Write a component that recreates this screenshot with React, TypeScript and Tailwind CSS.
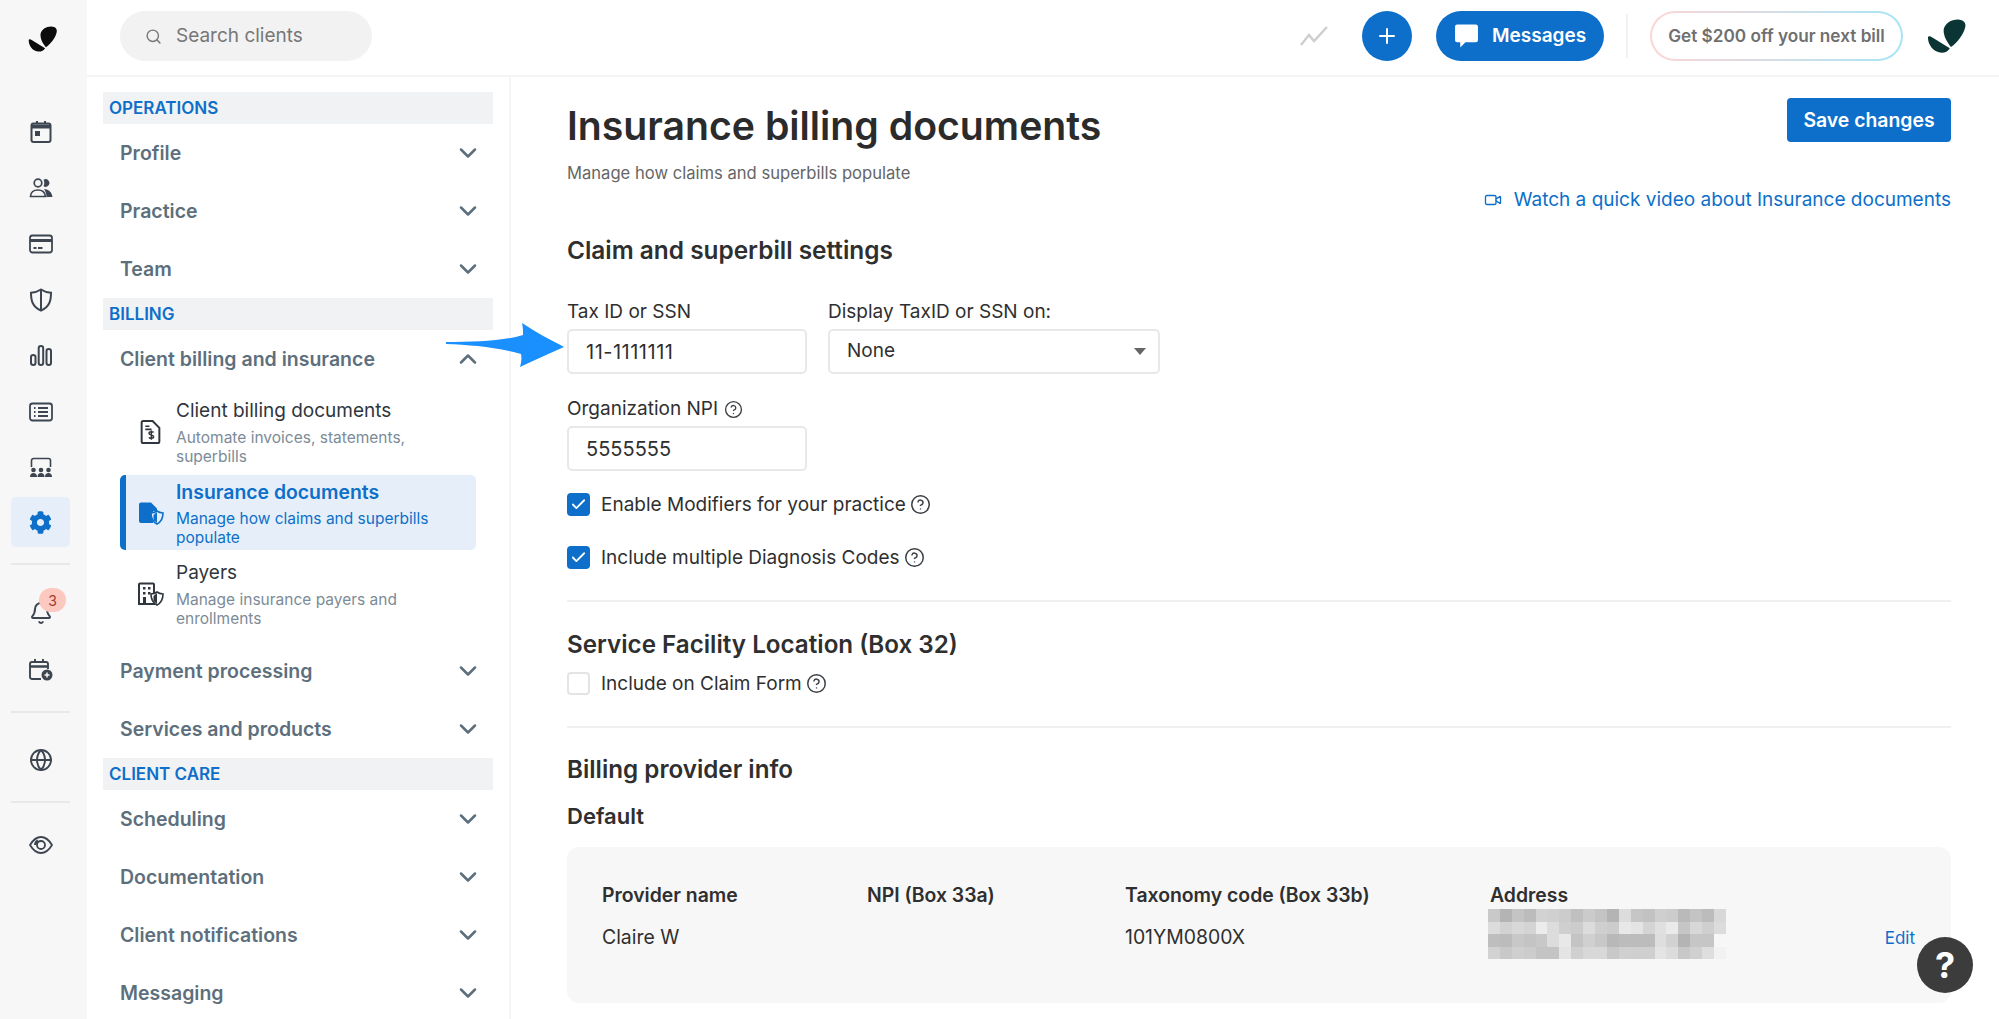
import { Bell, Check, ChevronDown, ChevronUp, CircleHelp, Globe, Plus, Search, Video } from "lucide-react";
import { FaCog } from "react-icons/fa";

const Logo = ({ className }: { className: string }) => (
  <svg viewBox="30 22 130 116" className={className} fill="currentColor">
    <path d="M84 60C88 38 108 26 130 26c20 0 28 12 24 26-6 26-28 50-46 64C96 100 84 84 84 60z" />
    <path d="M33 86c1-6 7-6 13-2l58 36c-6 12-20 16-32 14-22-4-38-24-39-48z" />
  </svg>
);

const CalendarIcon = () => (
  <svg viewBox="0 0 24 24" className="w-[24px] h-[24px]" fill="none" stroke="#3d4650" strokeWidth="2">
    <rect x="2.500" y="3.500" width="19" height="18.500" rx="2" />
    <path d="M2.500 6.500h19" strokeWidth="4" />
    <path d="M8 1v3M16 1v3" />
    <rect x="6" y="11" width="5" height="5" fill="#3d4650" stroke="none" />
  </svg>
);

const UsersIcon = () => (
  <svg viewBox="0 0 24 24" className="w-[24px] h-[24px]" fill="none" stroke="#3d4650" strokeWidth="1.700">
    <circle cx="9" cy="7" r="3.800" />
    <path d="M1.500 20.500c0-4 3.200-6.500 7.500-6.500s7 2.500 7.500 6.500z" />
    <path d="M14.500 3.800a3.800 3.800 0 1 1 0 6.400c1-1.800 1-4.600 0-6.400z" fill="#3d4650" stroke="none" />
    <path d="M15 13c5 .5 8 3.500 8.500 8h-6c0-3-1-6-2.500-8z" fill="#3d4650" stroke="none" />
  </svg>
);

const CardIcon = () => (
  <svg viewBox="0 0 24 24" className="w-[24px] h-[24px]" fill="none" stroke="#3d4650" strokeWidth="1.800">
    <rect x="1" y="3.500" width="22" height="17" rx="2.500" />
    <path d="M1 8.500h22" strokeWidth="3" />
    <path d="M4.500 16h3M9 16h4.500" />
  </svg>
);

const ShieldIcon = () => (
  <svg viewBox="0 0 24 24" className="w-[24px] h-[24px]" fill="none" stroke="#3d4650" strokeWidth="2">
    <path d="M12 1.500c3 2 6 3 10 3.200 0 8-1.500 14-10 18C3.500 18.700 2 12.700 2 4.700c4-.2 7-1.200 10-3.200z" />
    <path d="M12 2v20" />
  </svg>
);

const BarsIcon = () => (
  <svg viewBox="0 0 24 24" className="w-[24px] h-[24px]" fill="none" stroke="#3d4650" strokeWidth="2">
    <rect x="2" y="11" width="4.500" height="10" rx="2.200" />
    <rect x="9.700" y="2" width="4.500" height="19" rx="2.200" />
    <rect x="17.500" y="5" width="4.500" height="16" rx="2.200" />
  </svg>
);

const ListIcon = () => (
  <svg viewBox="0 0 24 24" className="w-[24px] h-[24px]" fill="none" stroke="#3d4650" strokeWidth="1.800">
    <rect x="1" y="3.500" width="22" height="17" rx="2.500" />
    <path d="M5 8h1.500M5 12h1.500M5 16h1.500M9 8h10M9 12h10M9 16h10" />
  </svg>
);

const GroupIcon = () => (
  <svg viewBox="0 0 24 24" className="w-[24px] h-[24px]" fill="#3d4650">
    <path d="M2.500 11V4.500a2 2 0 0 1 2-2h15a2 2 0 0 1 2 2V11" fill="none" stroke="#3d4650" strokeWidth="1.600" />
    <circle cx="4.500" cy="14" r="2.300" />
    <circle cx="12" cy="14" r="2.300" />
    <circle cx="19.500" cy="14" r="2.300" />
    <path d="M1 21c0-3 1.500-4 3.500-4S8 18 8 21zM8.500 21c0-3 1.500-4 3.500-4s3.500 1 3.500 4zM16 21c0-3 1.500-4 3.500-4s3.500 1 3.500 4z" />
  </svg>
);

const CalendarPlusIcon = () => (
  <svg viewBox="0 0 24 24" className="w-[24px] h-[24px]" fill="none" stroke="#3d4650" strokeWidth="1.900">
    <path d="M12 21H3a2 2 0 0 1-2-2V6a2 2 0 0 1 2-2h14a2 2 0 0 1 2 2v5" />
    <path d="M1 8.500h18" strokeWidth="2.500" />
    <path d="M6 1v4M14 1v4" />
    <circle cx="18" cy="17" r="5.500" fill="#3d4650" stroke="none" />
    <path d="M18 14.500v5M15.500 17h5" stroke="#f7f7f7" strokeWidth="1.500" />
  </svg>
);

const EyeIcon = () => (
  <svg viewBox="0 0 24 24" className="w-[24px] h-[24px]" fill="none" stroke="#3d4650" strokeWidth="1.800">
    <path d="M1 12c3-5 7-8 11-8s8 3 11 8c-3 5-7 8-11 8s-8-3-11-8z" />
    <circle cx="12" cy="12" r="4" />
    <path d="M9 7.500c-1.500.8-2.700 2.500-2.700 4.500" strokeWidth="2.500" />
  </svg>
);

const DocDollarIcon = () => (
  <svg viewBox="0 0 24 24" className="w-[25px] h-[26px]" fill="none" stroke="#2f363d" strokeWidth="1.900">
    <path d="M14 1.500H5a1.500 1.500 0 0 0-1.500 1.500v18A1.500 1.500 0 0 0 5 22.500h14a1.500 1.500 0 0 0 1.500-1.500V8z" />
    <path d="M7 6.500h4M7 9.500h6" strokeWidth="1.500" />
    <path d="M15 12.500c-.5-1-4.500-1.200-4.500.8s4.500 1.200 4.500 3.200-4 1.800-4.500.7M12.800 10.500v9" strokeWidth="1.400" />
  </svg>
);

const DocShieldIcon = () => (
  <svg viewBox="0 0 26 24" className="w-[26px] h-[24px]">
    <path d="M3 1.500h10l6 6V10h-4v12H3a2 2 0 0 1-2-2V3.500a2 2 0 0 1 2-2z" fill="#0d6fc9" />
    <path d="M19 10c2 1.400 3.500 1.800 6 2 0 5-1 8.500-6 11-5-2.500-6-6-6-11 2.500-.2 4-.6 6-2z" fill="#e6eff9" stroke="#0d6fc9" strokeWidth="1.600" />
    <path d="M19 11v11l-3.500-3v-5z" fill="#0d6fc9" />
  </svg>
);

const BuildingShieldIcon = () => (
  <svg viewBox="0 0 26 24" className="w-[26px] h-[24px]">
    <path d="M2 1.500h13a1 1 0 0 1 1 1V22H1V2.500a1 1 0 0 1 1-1z" fill="none" stroke="#2f363d" strokeWidth="2" />
    <path d="M5 5h2.500v2.500H5zM10 5h2.500v2.500H10zM5 10h2.500v2.500H5zM10 10h2.500v2.500H10zM5 15h3v7H5z" fill="#2f363d" />
    <path d="M19 10c2 1.400 3.500 1.800 6 2 0 5-1 8.500-6 11-5-2.500-6-6-6-11 2.500-.2 4-.6 6-2z" fill="#fff" stroke="#2f363d" strokeWidth="1.600" />
    <path d="M19 11v11l-3.500-3v-5z" fill="#2f363d" />
  </svg>
);

const railTop = [
  <CalendarIcon key="calendar" />,
  <UsersIcon key="users" />,
  <CardIcon key="card" />,
  <ShieldIcon key="shield" />,
  <BarsIcon key="bars" />,
  <ListIcon key="list" />,
  <GroupIcon key="group" />,
];

const Rail = () => (
  <div className="w-[87px] shrink-0 bg-[#f7f7f7] flex flex-col items-center pr-[6px]">
    <Logo className="w-[30px] h-[28px] mt-[25px] ml-[4px] text-[#0c0c0c]" />
    <div className="flex flex-col items-center mt-[51px]">
      {railTop.map((icon) => (
        <div key={icon.key} className="h-[56px] w-[59px] flex items-center justify-center">
          {icon}
        </div>
      ))}
      <div className="h-[50px] w-[59px] flex items-center justify-center bg-[#e6eff9] rounded-[5px] mt-[1px]">
        <FaCog size={23} color="#0d6fc9" />
      </div>
      <div className="w-[59px] h-[2px] bg-[#e8e8e8] mt-[16px]" />
      <div className="relative h-[58px] w-[59px] mt-[19px] flex items-center justify-center">
        <Bell size={24} color="#3d4650" strokeWidth={2} />
        <span className="absolute left-[28px] top-[4px] w-[27px] h-[24px] rounded-full bg-[#fdc8c0] text-[#a3392b] text-[14px] flex items-center justify-center">
          3
        </span>
      </div>
      <div className="h-[56px] w-[59px] flex items-center justify-center">
        <CalendarPlusIcon />
      </div>
      <div className="w-[59px] h-[2px] bg-[#e8e8e8] mt-[13px]" />
      <div className="h-[48px] w-[59px] flex items-center justify-center mt-[23px]">
        <Globe size={24} color="#3d4650" strokeWidth={1.9} />
      </div>
      <div className="w-[59px] h-[2px] bg-[#e8e8e8] mt-[17px]" />
      <div className="h-[48px] w-[59px] flex items-center justify-center mt-[18px]">
        <EyeIcon />
      </div>
    </div>
  </div>
);

const SectionTitle = ({ title }: { title: string }) => (
  <div className="h-[32px] bg-[#f1f2f4] flex items-center pl-[6px] pt-[2px] text-[17px] font-semibold text-[#0d6fc9]">{title}</div>
);

const NavRow = ({ label, open }: { label: string; open?: boolean }) => (
  <div className="h-[58px] flex items-center justify-between pl-[17px] pr-[11px] text-[19.500px] font-semibold text-[#5d6f7c]">
    <span className="mt-[2px]">{label}</span>
    {open ? <ChevronUp size={28} color="#5d6f7c" strokeWidth={2.2} /> : <ChevronDown size={28} color="#5d6f7c" strokeWidth={2.2} />}
  </div>
);

const SubItem = ({
  icon,
  title,
  lines,
  active,
}: {
  icon: React.ReactNode;
  title: string;
  lines: string[];
  active?: boolean;
}) => (
  <div
    className={
      active
        ? "h-[75px] ml-[17px] mr-[17px] flex bg-[#e6eff9] rounded-[5px] border-l-[6px] border-[#0d6fc9] pl-[12px] pt-[5px]"
        : "h-[75px] ml-[17px] mr-[17px] flex border-l-[6px] border-transparent pl-[12px] pt-[5px]"
    }
  >
    <div className="w-[38px] shrink-0 flex items-center pb-[5px]">{icon}</div>
    <div>
      <div className={active ? "text-[19.400px] leading-[24px] font-semibold text-[#0d6fc9] mb-[5px]" : "text-[19px] leading-[24px] text-[#2f363d] mb-[5px]"}>
        {title}
      </div>
      {lines.map((line) => (
        <div key={line} className={active ? "text-[15.500px] leading-[19px] text-[#0d6fc9]" : "text-[15.500px] leading-[19px] text-[#7c8b97]"}>
          {line}
        </div>
      ))}
    </div>
  </div>
);

const Sidebar = () => (
  <div className="w-[424px] shrink-0 border-r-2 border-[#f6f6f6] pl-[16px] pr-[16px] pt-[15px] overflow-hidden">
    <SectionTitle title="OPERATIONS" />
    <NavRow label="Profile" />
    <NavRow label="Practice" />
    <NavRow label="Team" />
    <SectionTitle title="BILLING" />
    <NavRow label="Client billing and insurance" open />
    <div className="mt-[6px] flex flex-col gap-[6px]">
      <SubItem icon={<DocDollarIcon />} title="Client billing documents" lines={["Automate invoices, statements,", "superbills"]} />
      <SubItem active icon={<DocShieldIcon />} title="Insurance documents" lines={["Manage how claims and superbills", "populate"]} />
      <SubItem icon={<BuildingShieldIcon />} title="Payers" lines={["Manage insurance payers and", "enrollments"]} />
    </div>
    <div className="mt-[11px]">
      <NavRow label="Payment processing" />
      <NavRow label="Services and products" />
    </div>
    <SectionTitle title="CLIENT CARE" />
    <NavRow label="Scheduling" />
    <NavRow label="Documentation" />
    <NavRow label="Client notifications" />
    <NavRow label="Messaging" />
  </div>
);

const Header = () => (
  <div className="h-[77px] shrink-0 border-b-2 border-[#f4f4f4] flex items-center pl-[33px] pr-[32px] pb-[3px]">
    <div className="w-[252px] h-[50px] rounded-full bg-[#f2f2f2] flex items-center pl-[25px] gap-[14px] text-[19px] text-[#777]">
      <Search size={17} color="#777" strokeWidth={2} />
      <span>Search clients</span>
    </div>
    <div className="ml-auto flex items-center">
      <svg viewBox="0 0 28 20" className="w-[28px] h-[20px] mr-[34px]" fill="none" stroke="#cfcfcf" strokeWidth="2.500">
        <path d="M1 19 9 9l5 6L27 1" />
      </svg>
      <div className="w-[50px] h-[50px] rounded-full bg-[#0d6fc9] flex items-center justify-center">
        <Plus size={24} color="#fff" strokeWidth={2} />
      </div>
      <div className="w-[168px] h-[50px] rounded-full bg-[#0d6fc9] ml-[24px] flex items-center pl-[18px] gap-[13px] text-[19px] font-semibold text-white">
        <svg viewBox="0 0 24 24" className="w-[25px] h-[28px]" fill="#fff">
          <path d="M3 1h18a2 2 0 0 1 2 2v13a2 2 0 0 1-2 2H11l-5 5v-5H3a2 2 0 0 1-2-2V3a2 2 0 0 1 2-2z" />
        </svg>
        <span>Messages</span>
      </div>
      <div className="w-[2px] h-[44px] bg-[#f2f2f2] ml-[22px]" />
      <div className="w-[253px] h-[50px] ml-[22px] rounded-full p-[2px] bg-gradient-to-r from-[#fcd5d5] to-[#a6e4f5]">
        <div className="w-full h-full rounded-full bg-white flex items-center justify-center text-[17.200px] font-semibold text-[#6f6f6f]">
          Get $200 off your next bill
        </div>
      </div>
      <Logo className="w-[40px] h-[38px] ml-[24px] text-[#0a3534]" />
    </div>
  </div>
);

const Hint = ({ size = 18 }: { size?: number }) => <CircleHelp size={size} color="#3a3f44" strokeWidth={1.7} />;

const Field = ({ value, className }: { value: string; className: string }) => (
  <div className={`h-[45px] border-2 border-[#e8e8e8] rounded-[5px] flex items-center pl-[17px] text-[#2f2f2f] ${className}`}>{value}</div>
);

const CheckRow = ({ label, on, className }: { label: string; on?: boolean; className: string }) => (
  <div className={`flex items-center text-[19px] leading-[27px] text-[#2f2f2f] ${className}`}>
    {on ? (
      <div className="w-[23px] h-[23px] rounded-[4px] bg-[#0d6fc9] flex items-center justify-center">
        <Check size={17} color="#fff" strokeWidth={2.5} />
      </div>
    ) : (
      <div className="w-[23px] h-[23px] rounded-[4px] bg-white border-2 border-[#e4e4e4]" />
    )}
    <span className="ml-[11px] mr-[4px]">{label}</span>
    <Hint size={21} />
  </div>
);

const blurCells = [
  "#c9c9c9", "#b4b4b4", "#c4c4c4", "#bcbcbc", "#d2d2d2", "#d0d0d0", "#cccccc", "#c0c0c0", "#cbcbcb", "#c4c4c4", "#b4b4b4", "#dcdcdc", "#c6c6c6", "#c2c2c2", "#cfcfcf", "#cccccc", "#bababa", "#c4c4c4", "#bcbcbc", "#d8d8d8",
  "#dcdcdc", "#d2d2d2", "#d8d8d8", "#d4d4d4", "#ececec", "#dcdcdc", "#cfcfcf", "#cccccc", "#dcdcdc", "#cfcfcf", "#cccccc", "#e8e8e8", "#e4e4e4", "#d4d4d4", "#e0e0e0", "#eaeaea", "#c6c6c6", "#d8d8d8", "#cfcfcf", "#dcdcdc",
  "#bebebe", "#bcbcbc", "#c8c8c8", "#c4c4c4", "#c8c8c8", "#dcdcdc", "#e8e8e8", "#c4c4c4", "#d0d0d0", "#c8c8c8", "#b8b8b8", "#bcbcbc", "#bcbcbc", "#bcbcbc", "#dedede", "#d2d2d2", "#b4b4b4", "#c6c6c6", "#c6c6c6", "#f7f7f7",
  "#d2d2d2", "#c8c8c8", "#cfcfcf", "#cccccc", "#c4c4c4", "#c4c4c4", "#e4e4e4", "#d0d0d0", "#d8d8d8", "#d8d8d8", "#c8c8c8", "#d0d0d0", "#cfcfcf", "#cfcfcf", "#e4e4e4", "#dcdcdc", "#c8c8c8", "#d0d0d0", "#dedede", "#f2f2f2",
];

const BlurredAddress = () => (
  <div className="w-[238px] grid grid-cols-[repeat(20,1fr)] mt-[2px] ml-[-2px] blur-[0.6px]">
    {blurCells.map((color, i) => (
      <div key={i} className="h-[12.500px]" style={{ backgroundColor: color }} />
    ))}
  </div>
);

const Main = () => (
  <div className="flex-1 pl-[56px] pr-[48px] overflow-hidden text-[#2f2f2f]">
    <div className="flex justify-between items-start">
      <div className="pt-[25px]">
        <h1 className="text-[39.200px] leading-[48px] font-semibold text-[#2b2b2b]">Insurance billing documents</h1>
        <p className="text-[16.600px] leading-[20px] mt-[13px] text-[#666]">Manage how claims and superbills populate</p>
      </div>
      <div className="mt-[21px] w-[164px] h-[44px] rounded-[4px] bg-[#0d6fc9] flex items-center justify-center pt-[1px] text-[19.400px] font-semibold text-white">
        Save changes
      </div>
    </div>
    <div className="flex justify-end items-center gap-[12px] mt-[5px] text-[19px] leading-[24px] text-[#0d6fc9]">
      <Video size={18} color="#0d6fc9" strokeWidth={1.8} />
      <span>Watch a quick video about Insurance documents</span>
    </div>
    <h2 className="text-[24.400px] leading-[30px] font-semibold mt-[23px]">Claim and superbill settings</h2>
    <div className="flex gap-[21px] mt-[35px]">
      <div className="w-[240px]">
        <label className="block text-[19px] leading-[24px] mb-[5px]">Tax ID or SSN</label>
        <Field value="11-1111111" className="w-full text-[20px] tracking-[0.5px]" />
      </div>
      <div className="w-[332px]">
        <label className="block text-[19px] leading-[24px] mb-[5px]">Display TaxID or SSN on:</label>
        <div className="relative">
          <Field value="None" className="w-full text-[19px]" />
          <span className="absolute right-[14px] top-[19px] w-0 h-0 border-l-[6px] border-r-[6px] border-t-[7px] border-l-transparent border-r-transparent border-t-[#666]" />
        </div>
      </div>
    </div>
    <label className="flex items-center gap-[6px] text-[19px] leading-[24px] mt-[23px] mb-[5px]">
      Organization NPI <Hint size={19} />
    </label>
    <Field value="5555555" className="w-[240px] text-[20px]" />
    <CheckRow on label="Enable Modifiers for your practice" className="mt-[20px]" />
    <CheckRow on label="Include multiple Diagnosis Codes" className="mt-[26px]" />
    <div className="h-[2px] bg-[#f0f0f0] mt-[29px]" />
    <h2 className="text-[24.200px] leading-[30px] font-semibold mt-[28px]">Service Facility Location (Box 32)</h2>
    <CheckRow label="Include on Claim Form" className="mt-[10px]" />
    <div className="h-[2px] bg-[#f0f0f0] mt-[29px]" />
    <h3 className="text-[24.200px] leading-[30px] font-semibold mt-[27px]">Billing provider info</h3>
    <h4 className="text-[22px] leading-[28px] font-semibold mt-[17px]">Default</h4>
    <div className="bg-[#f7f7f7] rounded-[12px] h-[156px] mt-[17px] pl-[35px] pr-[36px] pt-[36px] flex text-[19.400px]">
      <div className="w-[265px]">
        <div className="font-semibold leading-[24px]">Provider name</div>
        <div className="leading-[24px] mt-[18px]">Claire W</div>
      </div>
      <div className="w-[258px] font-semibold leading-[24px]">NPI (Box 33a)</div>
      <div className="w-[365px]">
        <div className="font-semibold leading-[24px]">Taxonomy code (Box 33b)</div>
        <div className="leading-[24px] mt-[18px]">101YM0800X</div>
      </div>
      <div>
        <div className="font-semibold leading-[24px]">Address</div>
        <BlurredAddress />
      </div>
      <div className="ml-auto text-[17px] leading-[24px] text-[#0d6fc9] mt-[43px]">Edit</div>
    </div>
  </div>
);

export default function App() {
  return (
    <div className="relative flex h-[1019px] w-[1999px] overflow-hidden bg-white font-['Inter',sans-serif]">
      <Rail />
      <div className="flex-1 flex flex-col min-w-0">
        <Header />
        <div className="flex flex-1 min-h-0">
          <Sidebar />
          <Main />
        </div>
      </div>
      {/* annotation arrow sitting over the form */}
      <svg viewBox="0 0 120 46" className="absolute left-[445px] top-[322px] w-[120px] h-[46px]">
        <path d="M1 20C30 20 58 19 78 13 78 9 78 5 77 1 92 11 106 18 119 25 104 32 89 38 75 45 76 41 77 37 76 32 52 25 25 23 1 22z" fill="#1a90ff" />
      </svg>
      <div className="absolute left-[1917px] top-[937px] w-[56px] h-[56px] rounded-full bg-[#3c3c3c] flex items-center justify-center text-[36px] font-bold text-white">
        ?
      </div>
    </div>
  );
}
